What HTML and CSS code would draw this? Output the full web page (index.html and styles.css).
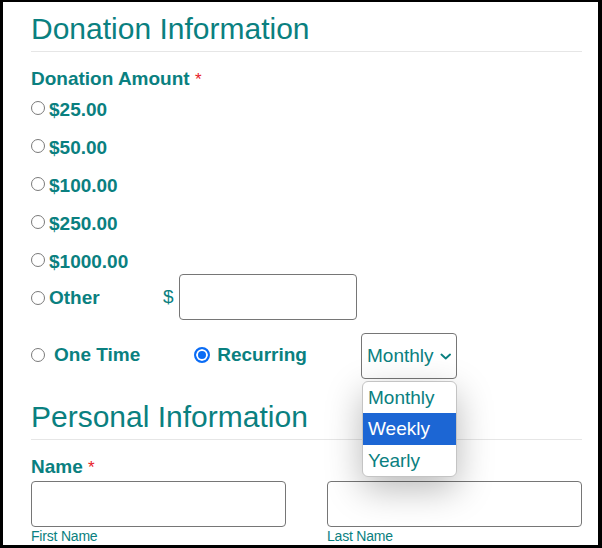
FILE: index.html
```html
<!DOCTYPE html>
<html lang="en">
<head>
    <meta charset="UTF-8">
    <meta name="viewport" content="width=device-width, initial-scale=1.0">
    <title>Donation Form</title>
    <link rel="stylesheet" href="styles.css">
</head>
<body>
    <div class="page">
        <h2 class="section-title">Donation Information</h2>
        <div class="field-label">Donation Amount <span class="req">*</span></div>
        <div class="amounts">
            <label class="amount"><input type="radio" name="amount">$25.00</label>
            <label class="amount"><input type="radio" name="amount">$50.00</label>
            <label class="amount"><input type="radio" name="amount">$100.00</label>
            <label class="amount"><input type="radio" name="amount">$250.00</label>
            <label class="amount"><input type="radio" name="amount">$1000.00</label>
            <div class="other-row">
                <label class="other-label"><input type="radio" name="amount">Other</label>
                <span class="currency">$</span>
                <input type="text" class="text-input other-input">
            </div>
        </div>
        <div class="frequency">
            <label class="freq-option"><input type="radio" name="freq">One Time</label>
            <label class="freq-option"><input type="radio" name="freq" checked>Recurring</label>
            <div class="select-wrap">
                <div class="select-box">
                    <span>Monthly</span>
                    <svg class="chevron" width="12" height="7" viewBox="0 0 12 7">
                        <path d="M1.5 1.5 L6 5.5 L10.5 1.5" fill="none" stroke="currentColor" stroke-width="2" stroke-linecap="round" stroke-linejoin="round"/>
                    </svg>
                </div>
                <ul class="select-menu">
                    <li>Monthly</li>
                    <li class="active">Weekly</li>
                    <li>Yearly</li>
                </ul>
            </div>
        </div>
        <h2 class="section-title section-title-next">Personal Information</h2>
        <div class="field-label">Name <span class="req">*</span></div>
        <div class="name-grid">
            <div>
                <input type="text" class="text-input">
                <div class="sub-label">First Name</div>
            </div>
            <div>
                <input type="text" class="text-input">
                <div class="sub-label">Last Name</div>
            </div>
        </div>
    </div>
</body>
</html>
```

FILE: styles.css
```css
body {
    margin: 0;
    font-family: 'Liberation Sans', Arial, sans-serif;
    color: #0a8080;
    background-color: #fff;
}
.page {
    height: 548px;
    box-sizing: border-box;
    overflow: hidden;
    border-style: solid;
    border-color: #000;
    border-width: 2px 4px 3px 3px;
    padding: 0 16px 0 28px;
    background-color: #fff;
}
.section-title {
    margin: 10px 0 0;
    padding-bottom: 5px;
    font-size: 30px;
    font-weight: normal;
    line-height: 34px;
    border-bottom: 1px solid #e6e6e6;
}
.section-title-next {
    margin-top: 21px;
}
.field-label {
    margin-top: 16px;
    font-size: 19px;
    font-weight: bold;
    line-height: 22px;
}
.req {
    color: #e8202a;
    font-size: 17px;
    font-weight: normal;
}
.amount {
    display: block;
    height: 38px;
    font-size: 19px;
    font-weight: bold;
    line-height: 38px;
}
input[type="radio"] {
    appearance: none;
    width: 14px;
    height: 14px;
    box-sizing: border-box;
    margin: 0 4px 0 0;
    border: 1.5px solid #7a7a7a;
    border-radius: 50%;
    background-color: #fff;
    vertical-align: 1px;
}
input[type="radio"]:checked {
    width: 16px;
    height: 16px;
    border: 2px solid #0a6cf5;
    background-color: #0a6cf5;
    box-shadow: inset 0 0 0 2px #fff;
}
.other-row {
    display: flex;
    align-items: center;
    height: 46px;
    margin-top: -7px;
    font-size: 19px;
}
.other-label {
    display: flex;
    align-items: center;
    width: 132px;
    font-weight: bold;
    line-height: 22px;
    margin-top: 2px;
}
.currency {
    margin-right: 5px;
}
.text-input {
    display: block;
    width: 100%;
    height: 46px;
    box-sizing: border-box;
    margin: 0;
    border: 1px solid #767676;
    border-radius: 4px;
    background-color: #fff;
}
.other-row .other-input {
    width: 178px;
}
.frequency {
    display: flex;
    align-items: center;
    gap: 54px;
    margin-top: 13px;
}
.freq-option {
    display: flex;
    align-items: center;
    font-size: 19px;
    font-weight: bold;
    line-height: 22px;
    margin-top: -3px;
}
.freq-option input[type="radio"] {
    margin-right: 9px;
}
.freq-option input[type="radio"]:checked {
    margin-right: 7px;
}
.select-wrap {
    position: relative;
}
.select-box {
    display: flex;
    align-items: center;
    width: 96px;
    height: 46px;
    box-sizing: border-box;
    padding: 0 5px;
    border: 1px solid #767676;
    border-radius: 4px;
    font-size: 19px;
}
.chevron {
    margin-left: 6px;
}
.select-menu {
    position: absolute;
    top: 48px;
    left: 1px;
    z-index: 5;
    width: 95px;
    box-sizing: border-box;
    margin: 0;
    padding: 0;
    list-style: none;
    background-color: #fff;
    border: 1px solid #c4c4c4;
    border-radius: 6px;
    overflow: hidden;
    box-shadow: 0 12px 36px rgba(0, 0, 0, 0.28);
}
.select-menu li {
    height: 31px;
    padding-left: 5px;
    font-size: 19px;
    line-height: 31px;
}
.select-menu li.active {
    height: 32px;
    line-height: 32px;
    background-color: #1c66d4;
    color: #fff;
}
.name-grid {
    display: grid;
    grid-template-columns: 1fr 1fr;
    column-gap: 41px;
    margin-top: 2px;
}
.sub-label {
    margin-top: 1px;
    font-size: 14px;
    line-height: 16px;
    letter-spacing: -0.2px;
}
```
